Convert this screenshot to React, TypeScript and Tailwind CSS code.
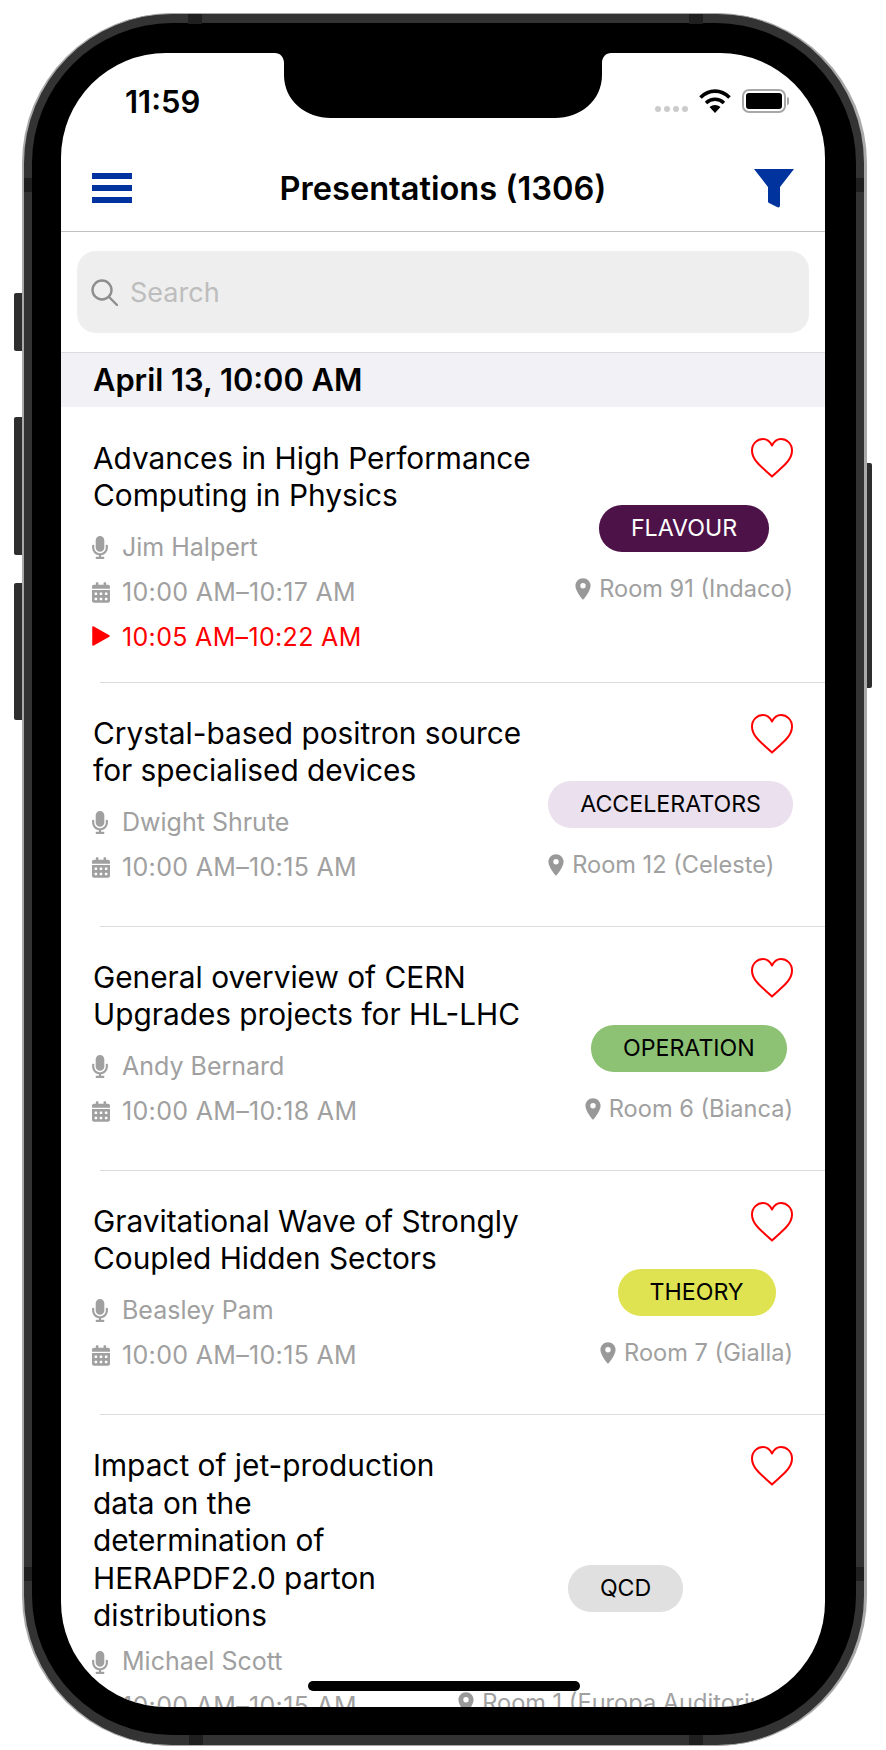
import { FaCalendarAlt, FaMicrophone } from 'react-icons/fa';
import { MdLocationOn } from 'react-icons/md';

interface Talk {
  title: string;
  speaker: string;
  time: string;
  live?: string;
  tag: string;
  tagClass: string;
  room: string;
  chipGap: string;
  roomClass: string;
  rowClass: string;
  titleClass: string;
  infoClass: string;
}

const talks: Talk[] = [
  {
    title: 'Advances in High Performance\nComputing in Physics',
    speaker: 'Jim Halpert',
    time: '10:00 AM–10:17 AM',
    live: '10:05 AM–10:22 AM',
    tag: 'FLAVOUR',
    tagClass: 'bg-[#4d1349] text-white',
    room: 'Room 91 (Indaco)',
    chipGap: 'mt-[27px]',
    roomClass: 'mt-[14px]',
    rowClass: 'pb-[22px]',
    titleClass: 'pt-[33px] leading-[37px]',
    infoClass: 'mt-[11px]',
  },
  {
    title: 'Crystal-based positron source\nfor specialised devices',
    speaker: 'Dwight Shrute',
    time: '10:00 AM–10:15 AM',
    tag: 'ACCELERATORS',
    tagClass: 'bg-[#ebe0ee] text-black',
    room: 'Room 12 (Celeste)',
    chipGap: 'mt-[27px]',
    roomClass: 'mt-[14px] self-start',
    rowClass: 'pb-[36px]',
    titleClass: 'pt-[32px] leading-[37px]',
    infoClass: 'mt-[11px]',
  },
  {
    title: 'General overview of CERN\nUpgrades projects for HL-LHC',
    speaker: 'Andy Bernard',
    time: '10:00 AM–10:18 AM',
    tag: 'OPERATION',
    tagClass: 'bg-[#8dc274] text-black',
    room: 'Room 6 (Bianca)',
    chipGap: 'mt-[27px]',
    roomClass: 'mt-[14px]',
    rowClass: 'pb-[36px]',
    titleClass: 'pt-[32px] leading-[37px]',
    infoClass: 'mt-[11px]',
  },
  {
    title: 'Gravitational Wave of Strongly\nCoupled Hidden Sectors',
    speaker: 'Beasley Pam',
    time: '10:00 AM–10:15 AM',
    tag: 'THEORY',
    tagClass: 'bg-[#dfe351] text-black',
    room: 'Room 7 (Gialla)',
    chipGap: 'mt-[27px]',
    roomClass: 'mt-[14px]',
    rowClass: 'pb-[36px]',
    titleClass: 'pt-[32px] leading-[37px]',
    infoClass: 'mt-[11px]',
  },
  {
    title: 'Impact of jet-production\ndata on the\ndetermination of\nHERAPDF2.0 parton\ndistributions',
    speaker: 'Michael Scott',
    time: '10:00 AM–10:15 AM',
    tag: 'QCD',
    tagClass: 'bg-[#e0e0e0] text-black',
    room: 'Room 1 (Europa Auditorium)',
    chipGap: 'mt-[79px]',
    roomClass: 'mt-[68px]',
    rowClass: 'pb-[36px]',
    titleClass: 'pt-[32px] leading-[37.5px]',
    infoClass: 'mt-[5px]',
  },
];

function Heart() {
  return (
    <svg width="42" height="40" viewBox="0 0 42 40" fill="none" stroke="#ff0000" strokeWidth="2" strokeLinejoin="round">
      <path d="M21 38.5 C15 32 1 24 1 12.5 C1 5.5 6.5 1 12 1 C16 1 19 3.5 21 7.5 C23 3.5 26 1 30 1 C35.5 1 41 5.5 41 12.5 C41 24 27 32 21 38.5 Z" />
    </svg>
  );
}

function InfoRow({ icon, text, red, timeRow }: { icon: React.ReactNode; text: string; red?: boolean; timeRow?: boolean }) {
  return (
    <div className={`flex h-[45px] items-center ${red ? 'text-[#ff0000]' : 'text-[#a0a0a0]'}`}>
      <span className="-ml-px flex w-[30px] shrink-0 items-center">{icon}</span>
      <span className={`text-[25px] whitespace-nowrap ${timeRow ? 'tracking-[0.33px]' : ''}`}>{text}</span>
    </div>
  );
}

function TalkRow({ talk, last }: { talk: Talk; last: boolean }) {
  return (
    <>
      <div className={`flex justify-between pr-[32px] pl-[32px] ${talk.rowClass}`}>
        <div className={talk.titleClass}>
          <h3 className="text-[29.8px] font-normal whitespace-pre-line text-black">{talk.title}</h3>
          <div className={talk.infoClass}>
            <InfoRow icon={<FaMicrophone className="h-[23px] w-[16px] text-[#a0a0a0]" />} text={talk.speaker} />
            <InfoRow icon={<FaCalendarAlt className="h-[21px] w-[18px] text-[#a0a0a0]" />} text={talk.time} timeRow />
            {talk.live && (
              <InfoRow
                red
                timeRow
                icon={
                  <svg className="-mt-[4px]" width="18" height="20" viewBox="0 0 18 20">
                    <path d="M1 1 L17 10 L1 19 Z" fill="#ff0000" stroke="#ff0000" strokeWidth="1.5" strokeLinejoin="round" />
                  </svg>
                }
                text={talk.live}
              />
            )}
          </div>
        </div>
        <div className="flex flex-col items-end pt-[31px]">
          <Heart />
          <div className="flex flex-col items-center">
            <span className={`flex h-[47px] items-center rounded-[23px] px-[32px] text-[23.2px] ${talk.chipGap} ${talk.tagClass}`}>
              {talk.tag}
            </span>
            <div className={`flex h-[45px] items-center gap-[8px] text-[#a0a0a0] ${talk.roomClass}`}>
              <MdLocationOn className="-mx-[5px] h-[26px] w-[26px] text-[#999999]" />
              <span className="text-[23.6px] whitespace-nowrap">{talk.room}</span>
            </div>
          </div>
        </div>
      </div>
      {!last && <div className="ml-[39px] h-px bg-[#dcdcdc]" />}
    </>
  );
}

function StatusIcons() {
  return (
    <div className="mt-[4px] flex items-center">
      <div className="mt-[16px] flex gap-[3px]">
        <span className="h-[6px] w-[6px] rounded-full bg-[#cccccc]" />
        <span className="h-[6px] w-[6px] rounded-full bg-[#cccccc]" />
        <span className="h-[6px] w-[6px] rounded-full bg-[#cccccc]" />
        <span className="h-[6px] w-[6px] rounded-full bg-[#cccccc]" />
      </div>
      <svg className="ml-[11px]" width="32" height="24" viewBox="0 0 32 24" fill="none" stroke="#000000" strokeWidth="3.6">
        <path d="M1.5 8.5 C10 0 22 0 30.5 8.5" />
        <path d="M7 14 C12.5 9 19.5 9 25 14" />
        <path d="M10.5 18 L16 24 L21.5 18 C18 15.2 14 15.2 10.5 18 Z" fill="#000000" stroke="none" />
      </svg>
      <div className="ml-[11px] flex items-center">
        <div className="flex h-[24px] w-[44px] rounded-[7px] border-2 border-[#a8a8a8] p-[2px]">
          <div className="flex-1 rounded-[3px] bg-black" />
        </div>
        <div className="ml-px h-[8px] w-[2px] rounded-r-full bg-[#a8a8a8]" />
      </div>
    </div>
  );
}

export default function App() {
  return (
    <div className="h-[1750px] w-[886px] overflow-hidden bg-white pt-[13px] pl-[22px] font-['Inter','Liberation_Sans',sans-serif]">
      <div className="relative h-[1733px] w-[845px] rounded-[150px] border-y border-r-[3px] border-l-2 border-[#a9a9a9] bg-[#333333] pt-[9px] pr-[8px] pb-[10px] pl-[8px]">
        {/* Side buttons */}
        <div className="absolute top-[279px] left-[-10px] h-[58px] w-[8px] rounded-l-[2px] bg-[#2e2e2e]" />
        <div className="absolute top-[403px] left-[-10px] h-[138px] w-[8px] rounded-l-[2px] bg-[#2e2e2e]" />
        <div className="absolute top-[569px] left-[-10px] h-[137px] w-[8px] rounded-l-[2px] bg-[#2e2e2e]" />
        <div className="absolute top-[449px] right-[-8px] h-[225px] w-[5px] rounded-r-[2px] bg-[#2e2e2e]" />

        {/* Antenna bands */}
        <div className="absolute top-0 left-[164px] h-[10px] w-[14px] bg-[#1f1f1f]" />
        <div className="absolute top-0 left-[665px] h-[10px] w-[14px] bg-[#1f1f1f]" />
        <div className="absolute bottom-0 left-[165px] h-[10px] w-[14px] bg-[#1f1f1f]" />
        <div className="absolute bottom-0 left-[665px] h-[10px] w-[14px] bg-[#1f1f1f]" />
        <div className="absolute top-[164px] left-0 h-[14px] w-[8px] bg-[#1f1f1f]" />
        <div className="absolute top-[164px] right-0 h-[14px] w-[8px] bg-[#1f1f1f]" />
        <div className="absolute bottom-[164px] left-0 h-[14px] w-[8px] bg-[#1f1f1f]" />
        <div className="absolute bottom-[164px] right-0 h-[14px] w-[8px] bg-[#1f1f1f]" />

        <div className="h-full rounded-[140px] bg-black pt-[30px] pr-[31px] pb-[28px] pl-[29px]">
          <div className="relative h-[1654px] w-[764px] overflow-hidden rounded-[105px] bg-white">
            {/* Notch */}
            <svg className="absolute top-0 left-[214px] z-10" width="336" height="65" viewBox="0 0 336 65">
              <path d="M0 0 H336 C331 0 327 4 327 10 V22 C327 48 305 65 280 65 H56 C31 65 9 48 9 22 V10 C9 4 5 0 0 0 Z" fill="#000000" />
            </svg>

            {/* Status bar */}
            <div className="flex h-[92px] items-start justify-between pt-[32px] pr-[36px] pl-[64px]">
              <span className="text-[31px] leading-[34px] font-semibold text-black">11:59</span>
              <StatusIcons />
            </div>

            {/* Nav bar */}
            <div className="flex h-[87px] items-center justify-between border-b border-[#c0c0c0] pr-[31px] pl-[31px]">
              <div className="flex w-[40px] flex-col gap-[6px]">
                <span className="h-[6px] bg-[#00339e]" />
                <span className="h-[6px] bg-[#00339e]" />
                <span className="h-[6px] bg-[#00339e]" />
              </div>
              <h1 className="text-[32.6px] font-semibold text-black">Presentations (1306)</h1>
              <svg width="40" height="40" viewBox="0 0 40 40">
                <path d="M0 1 H40 L26 19 V37 C26 39 25 40 23 39 L15 35 C14 34.5 14 34 14 33 V19 Z" fill="#00339e" />
              </svg>
            </div>

            {/* Search */}
            <div className="px-[16px] pt-[19px] pb-[19px]">
              <div className="flex h-[82px] items-center gap-[12px] rounded-[19px] bg-[#eeeeee] pl-[14px]">
                <svg width="27" height="27" viewBox="0 0 27 27" fill="none" stroke="#8e8e8e" strokeWidth="2.4" strokeLinecap="round">
                  <circle cx="11" cy="11" r="9.5" />
                  <path d="M18 18 L26 26" />
                </svg>
                <span className="mt-[2px] text-[27px] text-[#bdbdbd]">Search</span>
              </div>
            </div>

            {/* Section header */}
            <div className="flex h-[55px] items-center border-t border-[#dcdcdc] bg-[#f1f1f6] pl-[32px]">
              <h2 className="text-[30.8px] font-semibold text-black">April 13, 10:00 AM</h2>
            </div>

            {talks.map((talk, i) => (
              <TalkRow key={talk.speaker} talk={talk} last={i === talks.length - 1} />
            ))}

            {/* Home indicator */}
            <div className="absolute bottom-[16px] left-[247px] h-[10px] w-[272px] rounded-full bg-black" />
          </div>
        </div>
      </div>
    </div>
  );
}
